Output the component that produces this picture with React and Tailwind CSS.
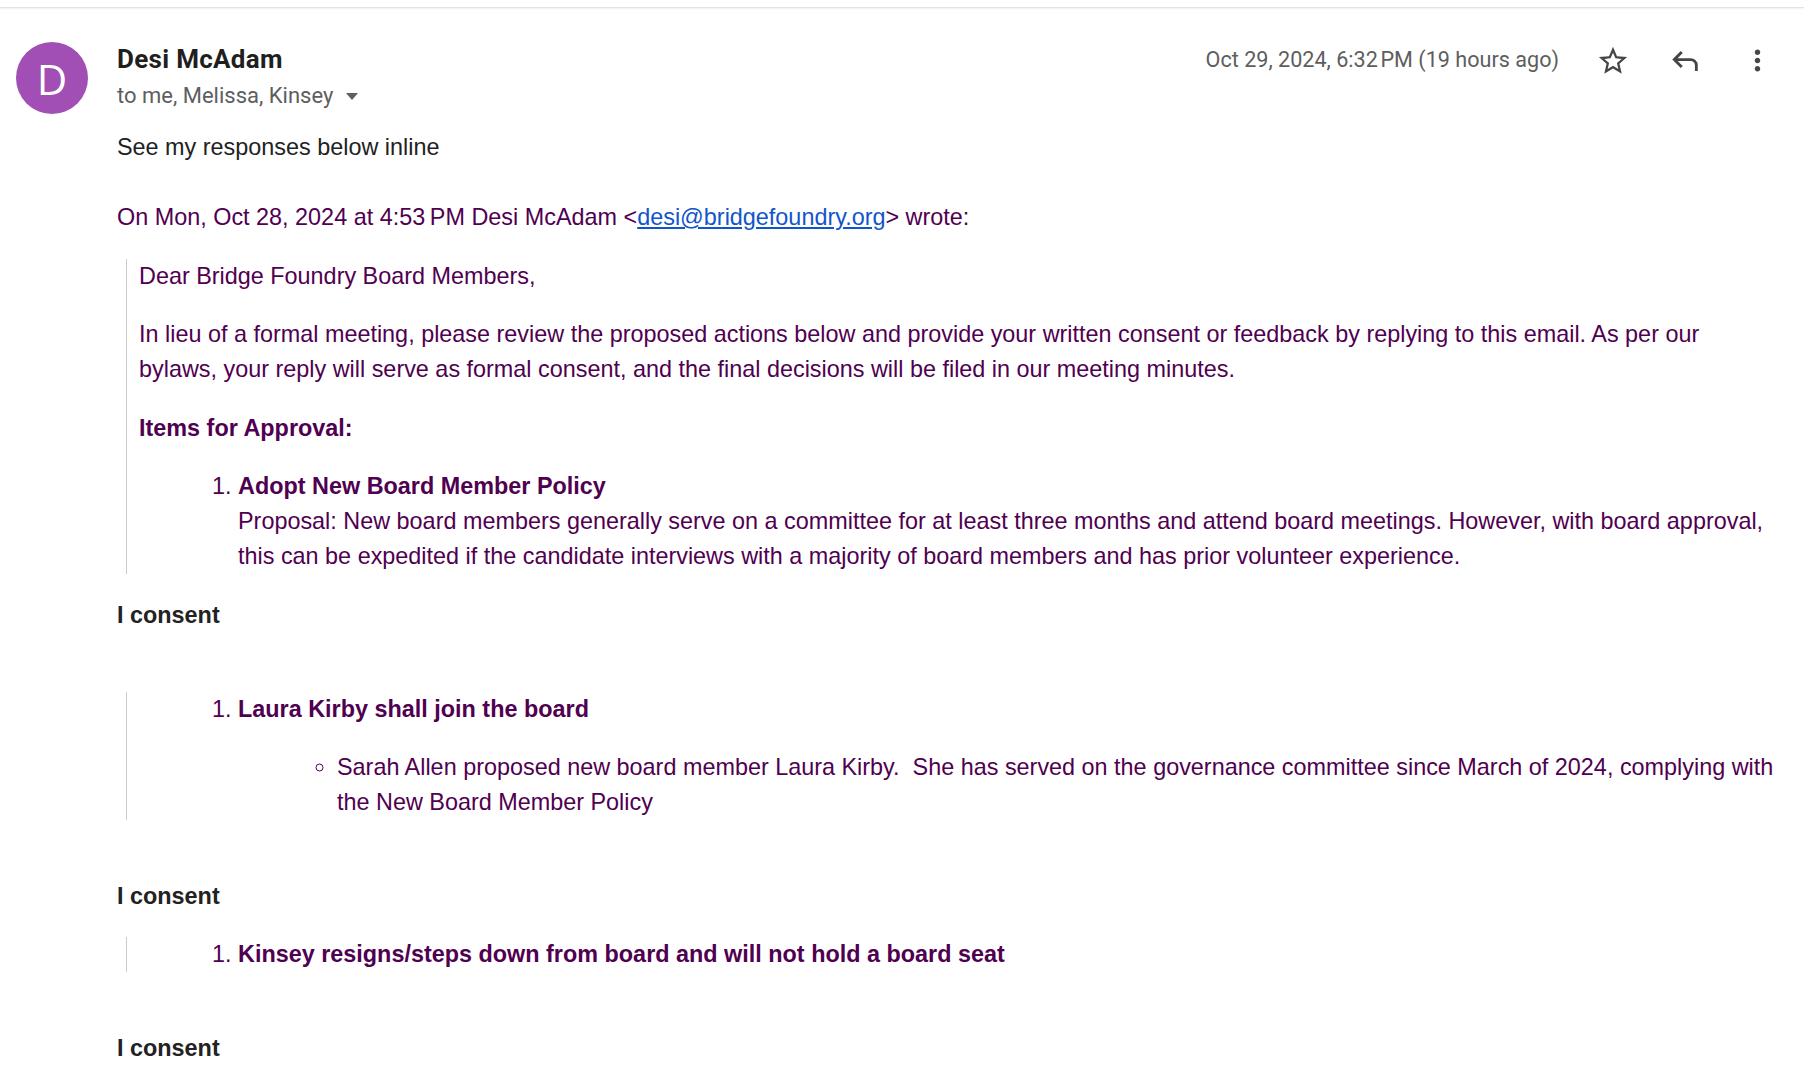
import React from 'react';

const StarIcon = () => (
  <svg viewBox="0 0 24 24" className="w-[34px] h-[34px]" fill="#444746">
    <path d="M22 9.24l-7.19-.62L12 2 9.19 8.63 2 9.24l5.46 4.73L5.82 21 12 17.27 18.18 21l-1.63-7.03L22 9.24zM12 15.4l-3.76 2.27 1-4.28-3.32-2.88 4.38-.38L12 6.1l1.71 4.04 4.38.38-3.32 2.88 1 4.28L12 15.4z" />
  </svg>
);

const ReplyIcon = () => (
  <svg viewBox="0 -960 960 960" className="w-[34px] h-[34px]" fill="#444746">
    <path d="M760-200v-160q0-50-35-85t-85-35H273l144 144-57 56-240-240 240-240 57 56-144 144h367q83 0 141.5 58.5T840-360v160h-80Z" />
  </svg>
);

const MoreIcon = () => (
  <svg viewBox="0 0 24 24" className="w-[33px] h-[33px]" fill="#444746">
    <path d="M12 8c1.1 0 2-.9 2-2s-.9-2-2-2-2 .9-2 2 .9 2 2 2zm0 2c-1.1 0-2 .9-2 2s.9 2 2 2 2-.9 2-2-.9-2-2-2zm0 6c-1.1 0-2 .9-2 2s.9 2 2 2 2-.9 2-2-.9-2-2-2z" />
  </svg>
);

const Quote = ({ children, className = '' }) => (
  <blockquote className={`ml-[9px] border-l border-[#cccccc] pl-3 text-[#500050] ${className}`}>
    {children}
  </blockquote>
);

export default function App() {
  return (
    <div className="min-h-screen bg-white">
      <div className="h-2 border-b border-[#e3e3e3] shadow-[0_1px_2px_rgba(0,0,0,0.06)]" />

      <div className="flex pl-4 pr-[11px] pt-[34px]">
        {/* avatar */}
        <div className="w-[72px] h-[72px] shrink-0 rounded-full bg-[#a14fb5] flex items-center justify-center text-white text-[42px] font-['Open_Sans',sans-serif]">
          D
        </div>

        <div className="ml-[29px] flex-1 min-w-0">
          <div className="flex items-start justify-between">
            <div>
              <div className="text-[26px] leading-[34px] font-bold tracking-[0.3px] text-[#1f1f1f] font-['Roboto',sans-serif]">Desi McAdam</div>
              <div className="mt-[5px] flex items-center text-[22px] leading-[29px] text-[#5e5e5e] font-['Roboto',sans-serif]">
                to me, Melissa, Kinsey
                <span className="ml-[13px] mt-[2px] w-0 h-0 border-l-[6px] border-r-[6px] border-t-[7px] border-l-transparent border-r-transparent border-t-[#5e5e5e]" />
              </div>
            </div>

            <div className="flex items-center h-[36px] pt-[1px] font-['Roboto',sans-serif]">
              <span className="text-[21.6px] text-[#5e5e5e] mr-[18px]">Oct 29, 2024, 6:32{'\u202f'}PM (19 hours ago)</span>
              <button className="w-[72px] h-[36px] flex items-center justify-center"><StarIcon /></button>
              <button className="w-[72px] h-[36px] flex items-center justify-center"><ReplyIcon /></button>
              <button className="w-[72px] h-[36px] flex items-center justify-center"><MoreIcon /></button>
            </div>
          </div>

          {/* body */}
          <div className="mt-[20px] pr-[15px] text-[23.4px] leading-[35px] text-[#222222] font-['Liberation_Sans',Arial,sans-serif]">
            <div>See my responses below inline</div>
            <div className="h-[35px]" />
            <div className="text-[#500050]">
              On Mon, Oct 28, 2024 at 4:53{'\u202f'}PM Desi McAdam &lt;<a href="#" className="text-[#1155cc] underline">desi@bridgefoundry.org</a>&gt; wrote:
            </div>

            <Quote className="mt-[23.5px]">
              <p>Dear Bridge Foundry Board Members,</p>
              <p className="mt-[23.5px]">
                In lieu of a formal meeting, please review the proposed actions below and provide your written consent or feedback by replying to this email. As per our bylaws, your reply will serve as formal consent, and the final decisions will be filed in our meeting minutes.
              </p>
              <p className="mt-[23.5px] font-bold">Items for Approval:</p>
              <ol className="mt-[23.5px] list-decimal pl-[99px]">
                <li>
                  <b>Adopt New Board Member Policy</b>
                  <br />
                  Proposal: New board members generally serve on a committee for at least three months and attend board meetings. However, with board approval, this can be expedited if the candidate interviews with a majority of board members and has prior volunteer experience.
                </li>
              </ol>
            </Quote>

            <p className="mt-[23.5px] font-bold">I consent</p>

            <Quote className="mt-[59px]">
              <ol className="list-decimal pl-[99px]">
                <li>
                  <b>Laura Kirby shall join the board</b>
                  <ul className="mt-[23px] list-[circle] pl-[99px]">
                    <li>Sarah Allen proposed new board member Laura Kirby.{'\u00a0'} She has served on the governance committee since March of 2024, complying with the New Board Member Policy</li>
                  </ul>
                </li>
              </ol>
            </Quote>

            <p className="mt-[59px] font-bold">I consent</p>

            <Quote className="mt-[23.5px]">
              <ol className="list-decimal pl-[99px]">
                <li><b>Kinsey resigns/steps down from board and will not hold a board seat</b></li>
              </ol>
            </Quote>

            <p className="mt-[59px] font-bold">I consent</p>
          </div>
        </div>
      </div>
    </div>
  );
}
